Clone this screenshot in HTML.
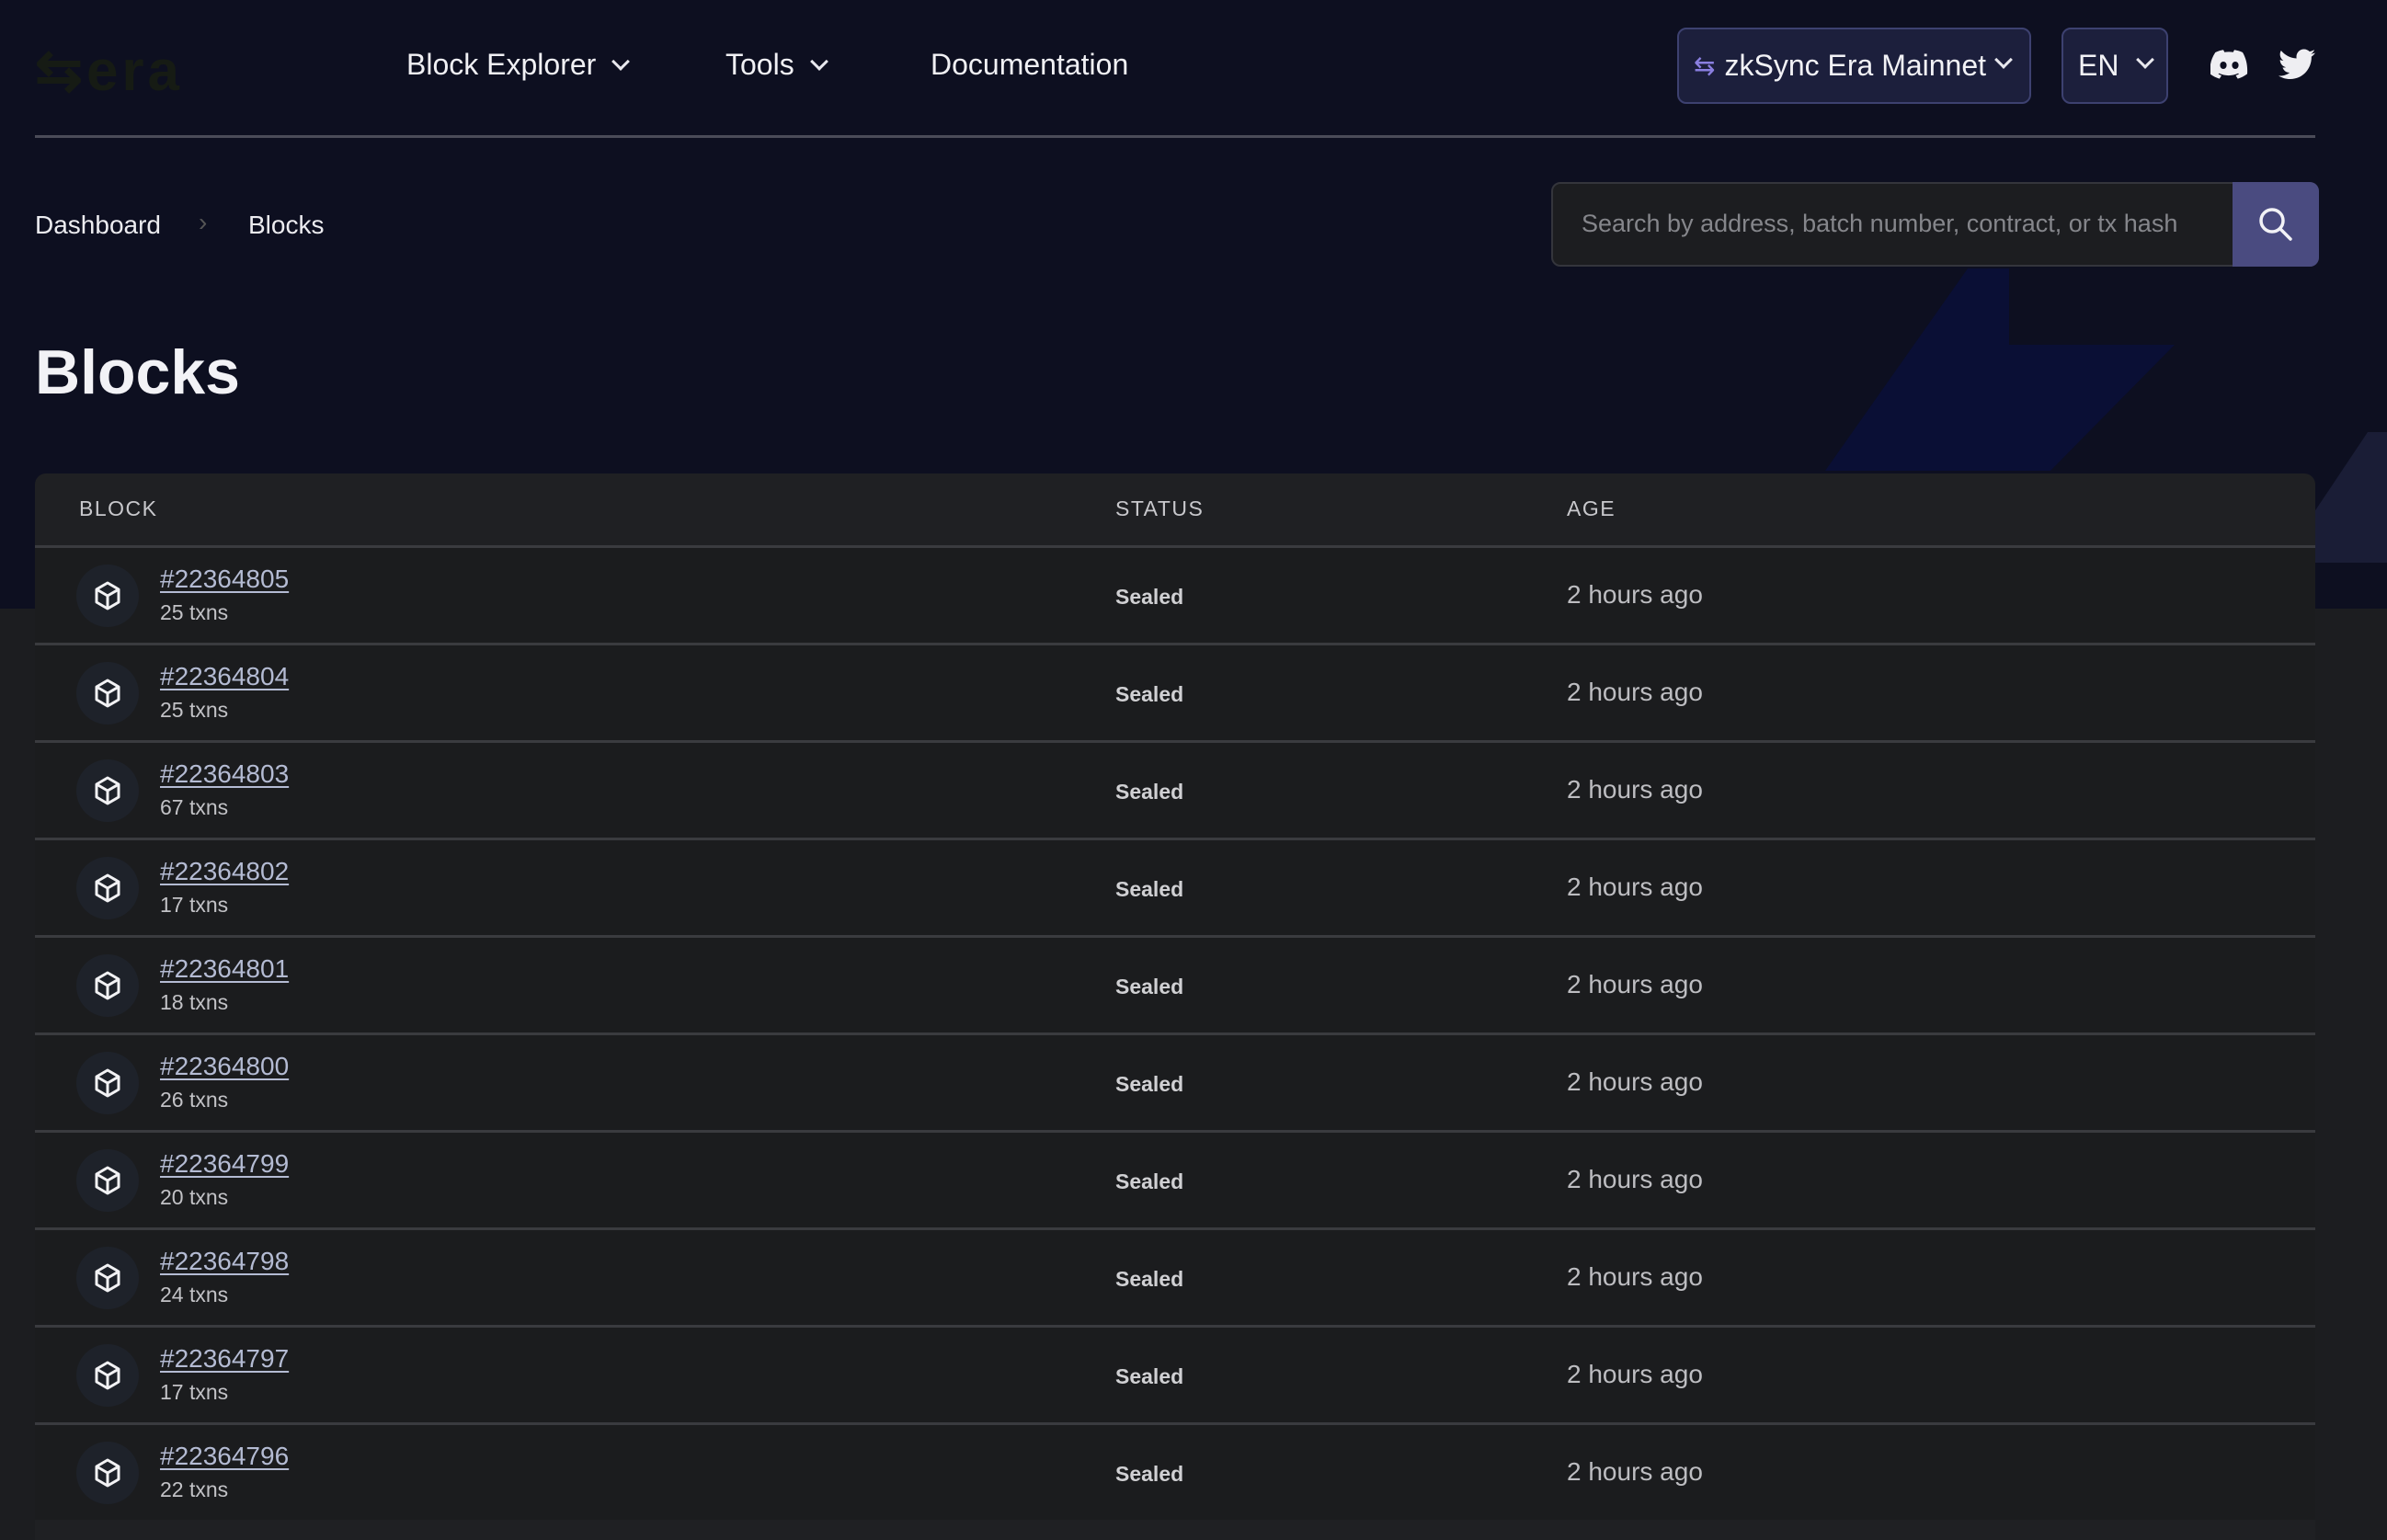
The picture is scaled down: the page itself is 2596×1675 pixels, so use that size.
<!DOCTYPE html>
<html><head><meta charset="utf-8"><style>
*{margin:0;padding:0;box-sizing:border-box}
body{width:2596px;height:1670px;overflow:hidden;background:#1c1d20;font-family:"Liberation Sans",sans-serif;position:relative}
.top{position:absolute;left:0;top:0;width:2596px;height:662px;background:#0d0f20;overflow:hidden}
.abs{position:absolute}
.nav{color:#f0f0f4;font-size:32px;top:52px}
.chev{display:inline-block;width:14px;height:14px;border-right:3px solid #e8e8ee;border-bottom:3px solid #e8e8ee;transform:rotate(45deg);margin-left:20px;position:relative;top:-7px}
.hr{left:38px;top:147px;width:2480px;height:3px;background:#4a4b58}
.btn{border:2px solid #3d4170;background:#1c1f3c;border-radius:10px;color:#f2f2f6;font-size:32px;display:flex;align-items:center}
.table{left:38px;top:515px;width:2480px;height:1160px;background:#1f2023;border-radius:12px 12px 0 0;overflow:hidden}
.th{position:absolute;top:25px;color:#c8c8cc;font-size:23px;letter-spacing:1.5px}
.row{position:absolute;left:0;width:2480px;height:106px;border-top:3px solid #3a3b3f;background:#1b1c1e}
.ic{position:absolute;left:45px;top:18px;width:68px;height:68px;border-radius:50%;background:#1e222a}
.ic svg{position:absolute;left:19px;top:18px}
.lnk{position:absolute;left:136px;top:18px;color:#b4bbd3;font-size:28px;text-decoration:underline;text-underline-offset:4px}
.tx{position:absolute;left:136px;top:57px;color:#c2c2c6;font-size:23px}
.st{position:absolute;left:1175px;top:40px;color:#d0d0d3;font-size:23px;font-weight:bold}
.age{position:absolute;left:1666px;top:35px;color:#bdbdc1;font-size:28px}
</style></head><body>
<div class="top">
  <svg class="abs" style="left:0;top:0" width="2596" height="662"><polygon points="2140,292 2185,292 2185,375 2365,375 2230,512 1985,512" fill="#0a0f35"/><polygon points="2575,470 2596,470 2596,612 2480,612" fill="#1a1d36"/></svg>
</div>
<div class="abs" style="left:38px;top:40px;color:#161b14;font-size:62px;font-weight:bold;letter-spacing:4px">⇆era</div>
<div class="abs nav" style="left:442px">Block Explorer<span class="chev"></span></div>
<div class="abs nav" style="left:789px">Tools<span class="chev"></span></div>
<div class="abs nav" style="left:1012px">Documentation</div>
<div class="abs btn" style="left:1824px;top:30px;width:385px;height:83px;padding-left:16px"><span style="color:#8a7fe0;font-size:28px;margin-right:10px">⇆</span>zkSync Era Mainnet<span class="chev" style="margin-left:12px"></span></div>
<div class="abs btn" style="left:2242px;top:30px;width:116px;height:83px;padding-left:16px">EN<span class="chev" style="margin-left:22px"></span></div>
<svg class="abs" style="left:2404px;top:54px" width="42" height="32" viewBox="0 0 42 32"><path d="M35 3C32 1.5 29 .7 26 .2l-1.3 2.6c-3-.5-6.4-.5-9.4 0L14 .2C11 .7 8 1.5 5.3 3 0 11-1 18.8-.5 26.4 3 29 6.4 30.6 9.8 31.6l2.2-3.5c-1.2-.4-2.4-1-3.5-1.6l.9-.7c6.7 3.1 14 3.1 20.7 0l.9.7c-1.1.6-2.3 1.2-3.5 1.6l2.2 3.5c3.4-1 6.8-2.6 10.3-5.2C40.6 17.6 39 9.9 35 3z" fill="#eeeef2"/><ellipse cx="14" cy="17" rx="3.6" ry="4" fill="#0d0f20"/><ellipse cx="27" cy="17" rx="3.6" ry="4" fill="#0d0f20"/></svg>
<svg class="abs" style="left:2478px;top:53px" width="40" height="34" viewBox="0 0 24 20"><path d="M24 2.4c-.9.4-1.8.6-2.8.8 1-.6 1.8-1.6 2.2-2.7-1 .6-2 1-3.1 1.2C19.3.7 18 .1 16.6.1c-2.7 0-4.900 2.2-4.9 4.9 0 .4 0 .8.1 1.1C7.7 5.9 4.1 4 1.7 1 1.2 1.8 1 2.6 1 3.500c0 1.7.9 3.2 2.2 4.1-.8 0-1.6-.2-2.2-.6v.1c0 2.4 1.7 4.4 3.9 4.8-.4.1-.8.2-1.3.2-.3 0-.6 0-.9-.1.6 2 2.4 3.4 4.6 3.4-1.7 1.3-3.8 2.1-6.1 2.1-.4 0-.8 0-1.2-.1C2.2 18.8 4.8 19.6 7.5 19.6c9.1 0 14-7.5 14-14v-.6c1-.7 1.8-1.6 2.5-2.6z" fill="#eeeef2"/></svg>
<div class="hr abs"></div>
<div class="abs" style="left:38px;top:229px;color:#ececf0;font-size:28px">Dashboard</div>
<div class="abs" style="left:216px;top:226px;color:#555;font-size:28px">›</div>
<div class="abs" style="left:270px;top:229px;color:#ececf0;font-size:28px">Blocks</div>
<div class="abs" style="left:1687px;top:198px;width:835px;height:92px;background:#1c1d20;border:2px solid #34353c;border-radius:10px"></div>
<div class="abs" style="left:1720px;top:228px;color:#85868b;font-size:27px">Search by address, batch number, contract, or tx hash</div>
<div class="abs" style="left:2428px;top:198px;width:94px;height:92px;background:#4a4b80;border-radius:0 10px 10px 0"></div>
<svg class="abs" style="left:2455px;top:224px" width="40" height="40" viewBox="0 0 40 40"><circle cx="16" cy="16" r="12" stroke="#f2f2f6" stroke-width="3.5" fill="none"/><path d="M25 25l11 11" stroke="#f2f2f6" stroke-width="3.5" stroke-linecap="round"/></svg>
<div class="abs" style="left:38px;top:366px;color:#f2f2f6;font-size:68px;font-weight:bold">Blocks</div>
<div class="abs table">
  <div class="th" style="left:48px">BLOCK</div>
  <div class="th" style="left:1175px">STATUS</div>
  <div class="th" style="left:1666px">AGE</div>
  <div id="rows"></div>
</div>
<script>
var d=[["22364805",25],["22364804",25],["22364803",67],["22364802",17],["22364801",18],["22364800",26],["22364799",20],["22364798",24],["22364797",17],["22364796",22]];
var h="";
d.forEach(function(r,i){h+='<div class="row" style="top:'+(78+i*106)+'px"><div class="ic"><svg width="30" height="32" viewBox="0 0 30 32"><path d="M15 2L27 9v14L15 30 3 23V9z M3 9l12 7 12-7 M15 16v14" stroke="#f2f2f4" stroke-width="3" fill="none" stroke-linejoin="round"/></svg></div><div class="lnk">#'+r[0]+'</div><div class="tx">'+r[1]+' txns</div><div class="st">Sealed</div><div class="age">2 hours ago</div></div>';});
document.getElementById("rows").innerHTML=h;
</script>
</body></html>
